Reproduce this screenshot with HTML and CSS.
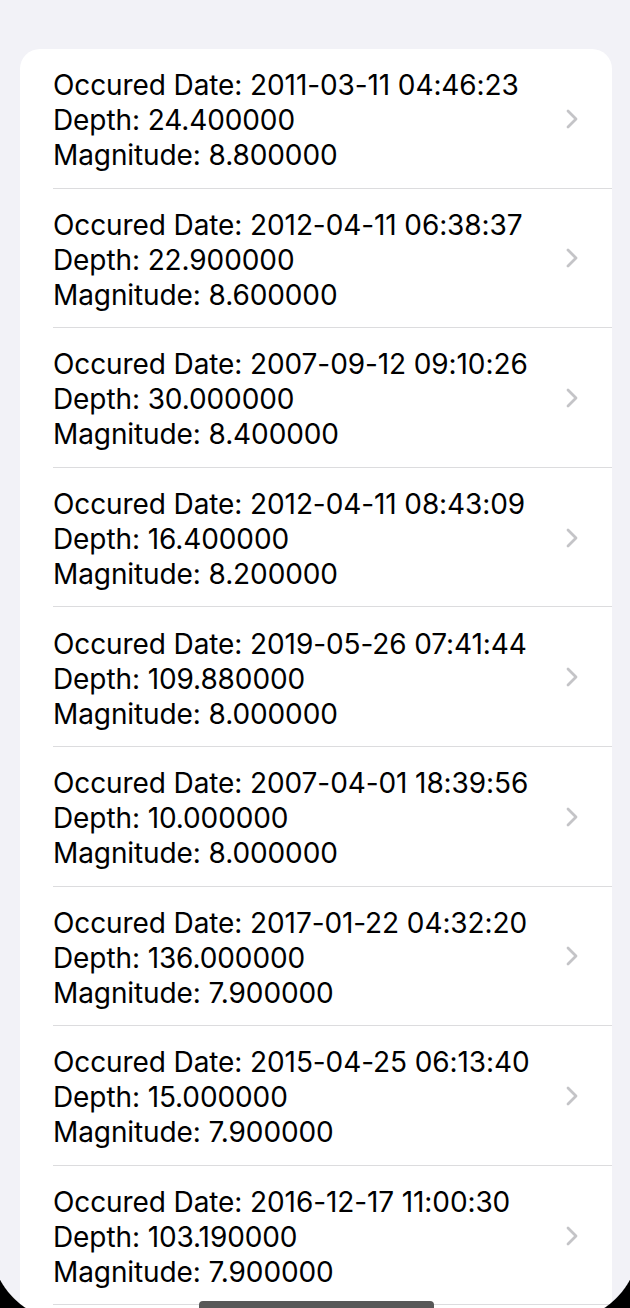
FILE: index.html
```html
<!DOCTYPE html>
<html>
<head>
<meta charset="utf-8">
<link rel="stylesheet" href="styles.css">
</head>
<body>
<div class="screen">
  <div class="list">
    <div class="row"><div class="row-body"><div class="text"><div>Occured Date: 2011-03-11 04:46:23</div><div>Depth: 24.400000</div><div>Magnitude: 8.800000</div></div><svg class="chev" width="12" height="20" viewBox="0 0 12 20"><polyline points="2,2 10,10 2,18"/></svg></div></div>
    <div class="row"><div class="row-body"><div class="text"><div>Occured Date: 2012-04-11 06:38:37</div><div>Depth: 22.900000</div><div>Magnitude: 8.600000</div></div><svg class="chev" width="12" height="20" viewBox="0 0 12 20"><polyline points="2,2 10,10 2,18"/></svg></div></div>
    <div class="row"><div class="row-body"><div class="text"><div>Occured Date: 2007-09-12 09:10:26</div><div>Depth: 30.000000</div><div>Magnitude: 8.400000</div></div><svg class="chev" width="12" height="20" viewBox="0 0 12 20"><polyline points="2,2 10,10 2,18"/></svg></div></div>
    <div class="row"><div class="row-body"><div class="text"><div>Occured Date: 2012-04-11 08:43:09</div><div>Depth: 16.400000</div><div>Magnitude: 8.200000</div></div><svg class="chev" width="12" height="20" viewBox="0 0 12 20"><polyline points="2,2 10,10 2,18"/></svg></div></div>
    <div class="row"><div class="row-body"><div class="text"><div>Occured Date: 2019-05-26 07:41:44</div><div>Depth: 109.880000</div><div>Magnitude: 8.000000</div></div><svg class="chev" width="12" height="20" viewBox="0 0 12 20"><polyline points="2,2 10,10 2,18"/></svg></div></div>
    <div class="row"><div class="row-body"><div class="text"><div>Occured Date: 2007-04-01 18:39:56</div><div>Depth: 10.000000</div><div>Magnitude: 8.000000</div></div><svg class="chev" width="12" height="20" viewBox="0 0 12 20"><polyline points="2,2 10,10 2,18"/></svg></div></div>
    <div class="row"><div class="row-body"><div class="text"><div>Occured Date: 2017-01-22 04:32:20</div><div>Depth: 136.000000</div><div>Magnitude: 7.900000</div></div><svg class="chev" width="12" height="20" viewBox="0 0 12 20"><polyline points="2,2 10,10 2,18"/></svg></div></div>
    <div class="row"><div class="row-body"><div class="text"><div>Occured Date: 2015-04-25 06:13:40</div><div>Depth: 15.000000</div><div>Magnitude: 7.900000</div></div><svg class="chev" width="12" height="20" viewBox="0 0 12 20"><polyline points="2,2 10,10 2,18"/></svg></div></div>
    <div class="row"><div class="row-body"><div class="text"><div>Occured Date: 2016-12-17 11:00:30</div><div>Depth: 103.190000</div><div>Magnitude: 7.900000</div></div><svg class="chev" width="12" height="20" viewBox="0 0 12 20"><polyline points="2,2 10,10 2,18"/></svg></div></div>
  </div>
  <div class="corner corner-left"></div>
  <div class="corner corner-right"></div>
  <div class="home-indicator"></div>
</div>
</body>
</html>
```

FILE: styles.css
```css
html, body {
  margin: 0;
  padding: 0;
  background: #f2f2f7;
}
.screen {
  position: relative;
  display: flex;
  flex-direction: column;
  width: 630px;
  height: 1308px;
  overflow: hidden;
  background: #f2f2f7;
  font-family: Inter, "Noto Sans", "Liberation Sans", sans-serif;
  color: #000;
}
.list {
  flex: 1;
  margin: 49px 18px 0 20px;
  background: #fff;
  border-radius: 20px 20px 0 0;
}
.row {
  padding-left: 33px;
}
.row-body {
  display: flex;
  align-items: center;
  justify-content: space-between;
  box-sizing: border-box;
  height: 139.6px;
  border-bottom: 1px solid #dcdcde;
  padding-right: 34px;
  padding-top: 5px;
}
.text {
  font-size: 28px;
  line-height: 35px;
  letter-spacing: -0.1px;
}
.chev {
  display: block;
  margin-top: -4px;
}
.chev polyline {
  fill: none;
  stroke: #c4c4c7;
  stroke-width: 2.8;
  stroke-linecap: round;
  stroke-linejoin: round;
}
.corner {
  position: absolute;
  bottom: 0;
  width: 80px;
  height: 70px;
  pointer-events: none;
}
.corner-left {
  left: 0;
  background: radial-gradient(circle at 70px 4px, transparent 79px, #000 80px);
}
.corner-right {
  right: 0;
  background: radial-gradient(circle at 10px 4px, transparent 79px, #000 80px);
}
.home-indicator {
  position: absolute;
  left: 199px;
  top: 1301px;
  width: 235px;
  height: 10px;
  border-radius: 4px;
  background: #585858;
}
```
